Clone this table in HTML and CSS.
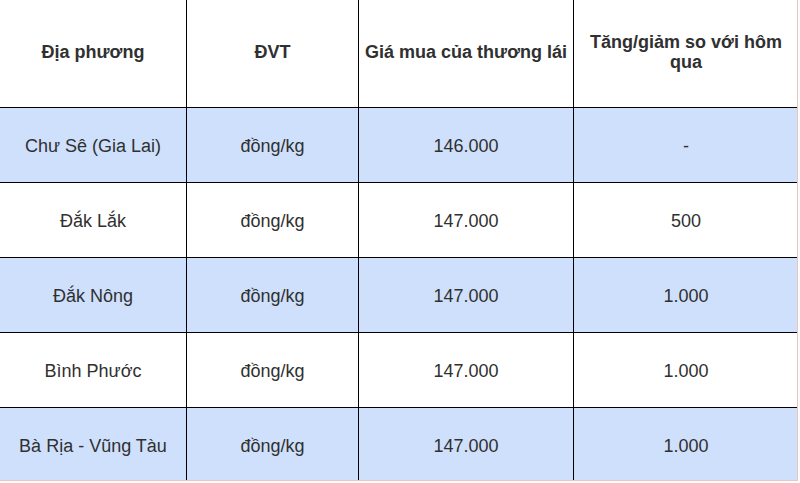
FILE: index.html
```html
<!DOCTYPE html>
<html lang="vi">
<head>
<meta charset="utf-8">
<link rel="stylesheet" href="styles.css">
</head>
<body>
<div class="frame">
<table class="price-table">
  <colgroup>
    <col class="c1"><col class="c2"><col class="c3"><col class="c4">
  </colgroup>
  <thead>
    <tr class="head">
      <th>Địa phương</th>
      <th>ĐVT</th>
      <th>Giá mua của thương lái</th>
      <th>Tăng/giảm so với hôm qua</th>
    </tr>
  </thead>
  <tbody>
    <tr class="blue"><td>Chư Sê (Gia Lai)</td><td>đồng/kg</td><td>146.000</td><td>-</td></tr>
    <tr><td>Đắk Lắk</td><td>đồng/kg</td><td>147.000</td><td>500</td></tr>
    <tr class="blue"><td>Đắk Nông</td><td>đồng/kg</td><td>147.000</td><td>1.000</td></tr>
    <tr><td>Bình Phước</td><td>đồng/kg</td><td>147.000</td><td>1.000</td></tr>
    <tr class="blue last"><td>Bà Rịa - Vũng Tàu</td><td>đồng/kg</td><td>147.000</td><td>1.000</td></tr>
  </tbody>
</table>
</div>
</body>
</html>
```

FILE: styles.css
```css
html, body {
  margin: 0;
  padding: 0;
  background: #ffffff;
}
body {
  width: 800px;
  height: 483px;
  overflow: hidden;
}
.frame {
  width: 797px;
  height: 480px;
  border-right: 1px solid #efc3b8;
  border-bottom: 1px solid #efc3b8;
  overflow: hidden;
  background: #ffffff;
}
.price-table {
  border-collapse: collapse;
  table-layout: fixed;
  width: 799px;
  margin: -1px 0 0 -1px;
  font-family: "Liberation Sans", Arial, sans-serif;
  font-size: 18px;
  color: #303030;
}
.c1 { width: 187px; }
.c2 { width: 172px; }
.c3 { width: 215px; }
.c4 { width: 225px; }
.price-table th,
.price-table td {
  border: 1px solid #000000;
  text-align: center;
  vertical-align: middle;
  padding: 0 4px;
  line-height: 20px;
}
.price-table th {
  font-weight: bold;
  height: 104px;
  padding-bottom: 3px;
}
.price-table td {
  height: 72px;
  padding-top: 2px;
}
.price-table .blue td {
  background: #cfe0fc;
}
.price-table .last td {
  border-bottom: none;
}
```
